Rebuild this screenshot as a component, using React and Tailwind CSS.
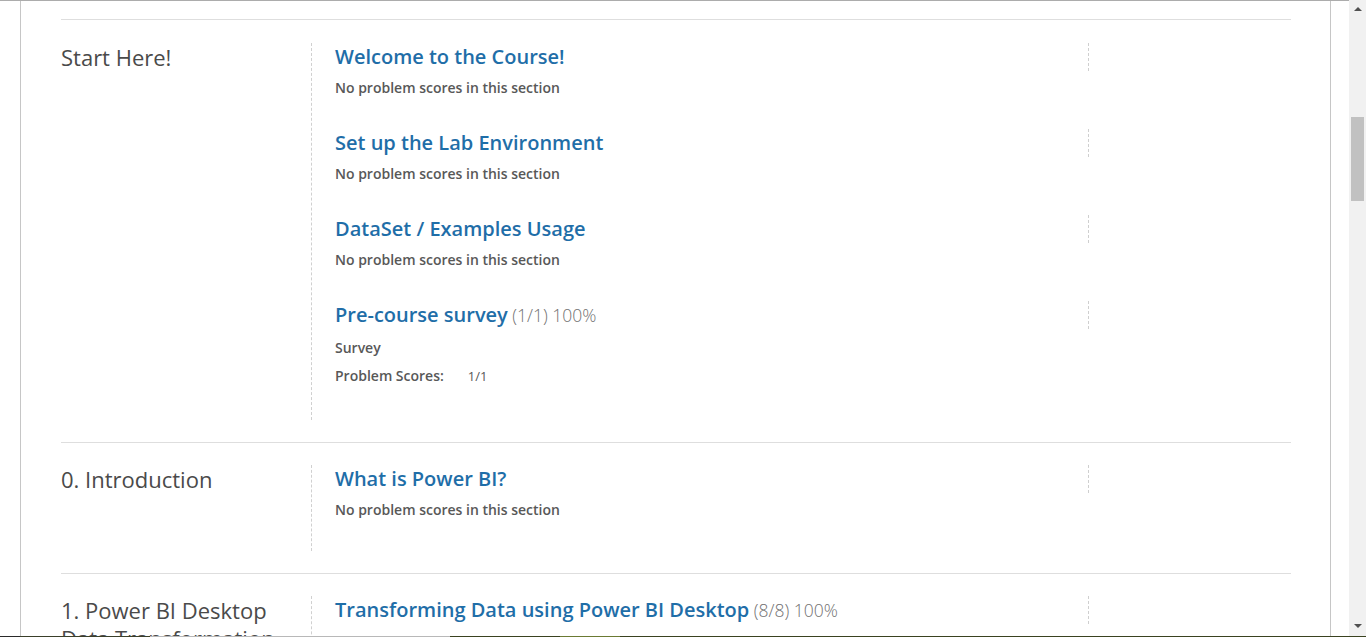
import React from "react";

function Sub({ title, score, children }) {
  return (
    <div className="pb-[31px]">
      <div className="w-[754px] h-[28px] border-r border-dashed border-[#cfcfcf] flex items-center">
        <h3 className="text-[20px] leading-[28px] font-semibold text-[#1f6ea8] whitespace-nowrap">
          {title}
          {score && (
            <span className="text-[17.5px] font-light text-[#727272]"> {score}</span>
          )}
        </h3>
      </div>
      {children || (
        <p className="mt-[7px] text-[14px] leading-[20px] font-semibold text-[#585858]">
          No problem scores in this section
        </p>
      )}
    </div>
  );
}

function Section({ title, children }) {
  return (
    <section className="border-t border-[#dedede] pt-[22px] first:pt-[23px] pb-[22px] flex">
      <h2 className="w-[250px] shrink-0 pr-[24px] text-[22px] leading-[28px] font-normal text-[#4a4a4a]">
        {title}
      </h2>
      <div className="border-l border-dashed border-[#d0d0d0] pl-[23px] flex flex-col">
        {children}
      </div>
    </section>
  );
}

export default function App() {
  return (
    <div className="relative w-[1366px] h-[637px] overflow-hidden bg-white flex font-['Open_Sans',sans-serif]">
      <div className="flex-1 flex flex-col min-w-0">
        <div className="h-px bg-[#acacac] shrink-0" />
        <div className="flex-1 ml-[20px] w-[1311px] border-l border-r border-[#c6c6c6] pl-[40px] pr-[39px] pt-[18px]">
          <Section title="Start Here!">
            <Sub title="Welcome to the Course!" />
            <Sub title="Set up the Lab Environment" />
            <Sub title="DataSet / Examples Usage" />
            <div className="pb-[34px]">
              <div className="w-[754px] h-[28px] border-r border-dashed border-[#cfcfcf] flex items-center">
                <h3 className="text-[20px] leading-[28px] font-semibold text-[#1f6ea8] whitespace-nowrap">
                  Pre-course survey
                  <span className="text-[17.5px] font-light text-[#727272]"> (1/1) 100%</span>
                </h3>
              </div>
              <p className="mt-[9px] text-[14px] leading-[20px] font-semibold text-[#585858]">Survey</p>
              <div className="mt-[8px] flex items-center text-[14px] leading-[20px]">
                <span className="font-semibold text-[#585858]">Problem Scores:</span>
                <span className="ml-[24px] text-[13px] text-[#585858]">1/1</span>
              </div>
            </div>
          </Section>
          <Section title="0. Introduction">
            <Sub title="What is Power BI?" />
          </Section>
          <Section title="1. Power BI Desktop Data Transformation">
            <Sub title="Transforming Data using Power BI Desktop" score="(8/8) 100%">
              <div className="h-[40px]" />
            </Sub>
          </Section>
        </div>
      </div>
      <div className="w-[17px] shrink-0 bg-[#f1f1f1] flex flex-col items-center relative">
        <div className="h-[17px] w-full flex items-center justify-center">
          <div className="w-0 h-0 border-l-[4px] border-r-[4px] border-b-[4px] border-l-transparent border-r-transparent border-b-[#505050]" />
        </div>
        <div className="mt-[100px] w-[13px] h-[84px] bg-[#c1c1c1]" />
        <div className="mt-auto mb-[3px] h-[17px] w-full flex items-center justify-center">
          <div className="w-0 h-0 border-l-[4px] border-r-[4px] border-t-[4px] border-l-transparent border-r-transparent border-t-[#505050]" />
        </div>
      </div>
      <div className="absolute left-0 right-0 bottom-0 h-px flex">
        <div className="w-[20px] bg-[#2a2a2a]" />
        <div className="w-[130px] bg-[#3a3f2a]" />
        <div className="w-[300px] bg-[#b8b8b8]" />
        <div className="w-[110px] bg-[#3a4220]" />
        <div className="w-[60px] bg-[#6b7a33]" />
        <div className="flex-1 bg-[#3a4220]" />
      </div>
    </div>
  );
}
